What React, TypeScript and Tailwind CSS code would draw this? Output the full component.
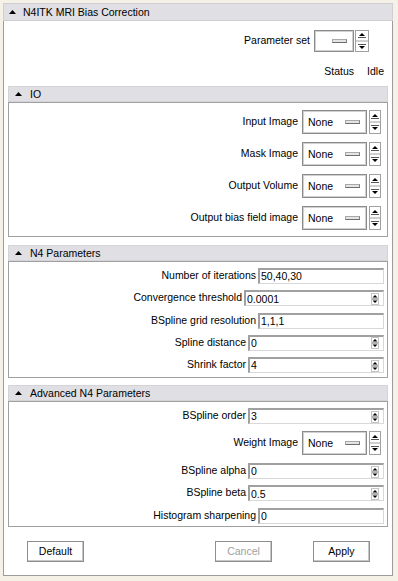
import React from 'react';

function Tri() {
  return (
    <svg width="7" height="4" viewBox="0 0 7 4" className="shrink-0">
      <polygon points="0,4 7,4 3.5,0" fill="#000" />
    </svg>
  );
}

function SectionHeader({ title }: { title: string }) {
  return (
    <div className="h-[16px] flex items-center gap-[8px] pl-[6px] bg-[#e0dfe3] border border-[#d4d3d8]">
      <Tri />
      <span className="text-[10.5px] leading-none">{title}</span>
    </div>
  );
}

// little raised bar drawn inside option menus
function Indicator() {
  return <span className="w-[15px] h-[4px] bg-[#e4e3e8] border border-[#a8a8a8] border-b-[#6e6e6e] border-r-[#7e7e7e]" />;
}

function ArrowPair({ w = 12, h = 24 }: { w?: number; h?: number }) {
  const mid = h / 2;
  const cx = w / 2;
  return (
    <svg width={w} height={h} viewBox={`0 0 ${w} ${h}`} className="shrink-0">
      <rect x="0.5" y="0.5" width={w - 1} height={h - 1} fill="#fff" stroke="#a0a0a0" />
      <line x1="0" y1={mid} x2={w} y2={mid} stroke="#a0a0a0" />
      <polygon points={`${cx - 3},${mid - 5} ${cx + 3},${mid - 5} ${cx},${mid - 8}`} fill="#000" />
      <line x1={cx - 4} y1={mid - 3.5} x2={cx + 4} y2={mid - 3.5} stroke="#555" />
      <line x1={cx - 4} y1={mid + 3.5} x2={cx + 4} y2={mid + 3.5} stroke="#555" />
      <polygon points={`${cx - 3},${mid + 5} ${cx + 3},${mid + 5} ${cx},${mid + 8}`} fill="#000" />
    </svg>
  );
}

function SpinGlyph() {
  return (
    <svg width="8" height="12" viewBox="0 0 8 12" className="shrink-0">
      <rect x="0.5" y="0.5" width="7" height="11" fill="#fff" stroke="#c4c4c4" />
      <polygon points="1.5,4.5 6.5,4.5 4,2" fill="#000" />
      <line x1="1" y1="6" x2="7" y2="6" stroke="#666" />
      <polygon points="1.5,7.5 6.5,7.5 4,10" fill="#000" />
    </svg>
  );
}

function Combo({ label, value = 'None' }: { label: string; value?: string }) {
  return (
    <div className="flex items-center justify-end h-[24px]">
      <span className="text-[10.5px] mr-[4px]">{label}</span>
      <div className="w-[65px] h-[24px] flex items-center justify-between pl-[5px] pr-[6px] bg-white border border-[#8c8c8c] shadow-[inset_1px_1px_0_#d0d0d0,inset_-1px_-1px_0_#d0d0d0]">
        <span className="text-[10.5px] pt-[2px]">{value}</span>
        <Indicator />
      </div>
      <div className="ml-[2px]">
        <ArrowPair />
      </div>
    </div>
  );
}

function Field({ label, value, width, spin }: { label: string; value: string; width: number; spin?: boolean }) {
  return (
    <div className="flex items-center justify-end h-[16px]">
      <span className="text-[10.5px] mr-[2px]">{label}</span>
      <div
        className="h-[16px] flex items-center justify-between pl-[1px] pr-[4px] bg-white border-t-2 border-l-2 border-r border-b border-t-[#a0a0a0] border-l-[#a0a0a0] border-r-[#d8d8d8] border-b-[#d8d8d8]"
        style={{ width }}
      >
        <span className="text-[10.5px] leading-none">{value}</span>
        {spin && <SpinGlyph />}
      </div>
    </div>
  );
}

function Btn({ children, disabled }: { children: React.ReactNode; disabled?: boolean }) {
  return (
    <button
      className={
        'w-[57px] h-[21px] bg-white border border-[#8e8e8e] shadow-[inset_-1px_-1px_0_#c8c8c8] text-[10.5px] ' +
        (disabled ? 'text-[#a0a0a0]' : 'text-black')
      }
    >
      {children}
    </button>
  );
}

export default function App() {
  return (
    <div className="w-[398px] h-[581px] bg-[#f6f1e6] pt-[3px] pl-[3px] pr-[5px] pb-[5px] font-['Liberation_Sans',Arial,sans-serif] text-black">
      <div className="h-full flex flex-col">
        {/* Title bar */}
        <div className="h-[18px] flex items-center gap-[7px] pl-[5px] bg-[#e0dfe3] border border-[#cfced3]">
          <Tri />
          <span className="text-[10.5px] leading-none">N4ITK MRI Bias Correction</span>
        </div>

        <div className="flex-1 flex flex-col bg-white border-x border-b border-[#9c9c9c] pl-[4px] pr-[4px]">
          {/* Parameter set */}
          <div className="mt-[9px] h-[22px] flex items-center justify-end pr-[19px]">
            <span className="text-[10.5px] mr-[4px]">Parameter set</span>
            <div className="w-[40px] h-[22px] flex items-center justify-end pr-[6px] bg-white border border-[#8c8c8c] shadow-[inset_1px_1px_0_#d0d0d0,inset_-1px_-1px_0_#d0d0d0]">
              <Indicator />
            </div>
            <div className="ml-[1px]">
              <ArrowPair w={14} h={22} />
            </div>
          </div>

          {/* Status */}
          <div className="mt-[13px] h-[14px] flex items-center justify-end gap-[13px] pr-[4px] text-[10.5px]">
            <span>Status</span>
            <span>Idle</span>
          </div>

          {/* IO */}
          <div className="mt-[7px]">
            <SectionHeader title="IO" />
            <div className="h-[135px] border border-[#a0a0a0] pt-[7px] pr-[6px] flex flex-col gap-[8px]">
              <Combo label="Input Image" />
              <Combo label="Mask Image" />
              <Combo label="Output Volume" />
              <Combo label="Output bias field image" />
            </div>
          </div>

          {/* N4 Parameters */}
          <div className="mt-[8px]">
            <SectionHeader title="N4 Parameters" />
            <div className="h-[117px] border border-[#a0a0a0] pt-[6px] pr-[3px] flex flex-col gap-[6.3px]">
              <Field label="Number of iterations" value="50,40,30" width={126} />
              <Field label="Convergence threshold" value="0.0001" width={140} spin />
              <Field label="BSpline grid resolution" value="1,1,1" width={126} />
              <Field label="Spline distance" value="0" width={136} spin />
              <Field label="Shrink factor" value="4" width={136} spin />
            </div>
          </div>

          {/* Advanced N4 Parameters */}
          <div className="mt-[7px]">
            <SectionHeader title="Advanced N4 Parameters" />
            <div className="h-[126px] border border-[#a0a0a0] pt-[6px] pr-[3px] flex flex-col">
              <Field label="BSpline order" value="3" width={136} spin />
              <div className="mt-[7px] pr-[3px]">
                <Combo label="Weight Image" />
              </div>
              <div className="mt-[8px] flex flex-col gap-[6.3px]">
                <Field label="BSpline alpha" value="0" width={136} spin />
                <Field label="BSpline beta" value="0.5" width={136} spin />
                <Field label="Histogram sharpening" value="0" width={126} />
              </div>
            </div>
          </div>

          {/* Buttons */}
          <div className="mt-[14px] flex items-center justify-between pl-[19px] pr-[18px]">
            <Btn>Default</Btn>
            <div className="flex gap-[41px]">
              <Btn disabled>Cancel</Btn>
              <Btn>Apply</Btn>
            </div>
          </div>
        </div>
      </div>
    </div>
  );
}
